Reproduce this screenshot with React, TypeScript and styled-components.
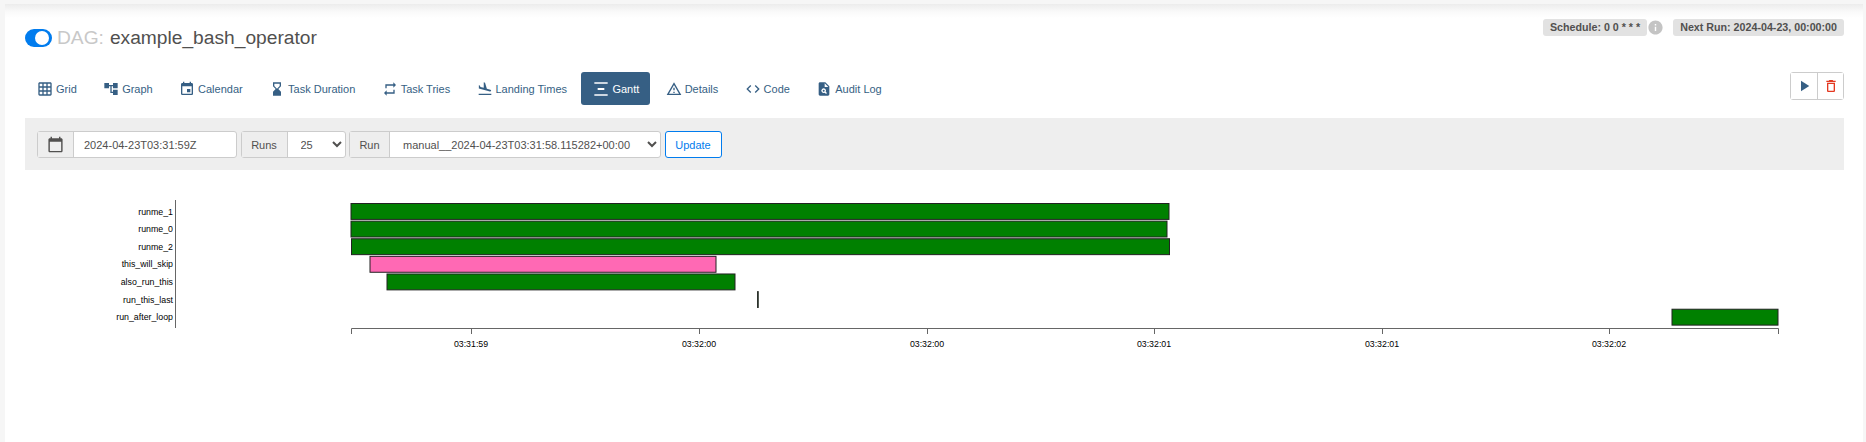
import { FC } from "react"
import styled, { createGlobalStyle } from "styled-components"
import { IconType } from "react-icons"
import {
  MdAccountTree,
  MdCalendarToday,
  MdCode,
  MdDeleteOutline,
  MdEvent,
  MdFlightLand,
  MdGridOn,
  MdHourglassBottom,
  MdInfo,
  MdOutlineWarningAmber,
  MdPlagiarism,
  MdPlayArrow,
  MdRepeat,
  MdVerticalDistribute,
} from "react-icons/md"

type Tab = { label: string; icon: IconType; active?: boolean }

const tabs: Tab[] = [
  { label: "Grid", icon: MdGridOn },
  { label: "Graph", icon: MdAccountTree },
  { label: "Calendar", icon: MdEvent },
  { label: "Task Duration", icon: MdHourglassBottom },
  { label: "Task Tries", icon: MdRepeat },
  { label: "Landing Times", icon: MdFlightLand },
  { label: "Gantt", icon: MdVerticalDistribute, active: true },
  { label: "Details", icon: MdOutlineWarningAmber },
  { label: "Code", icon: MdCode },
  { label: "Audit Log", icon: MdPlagiarism },
]

type Task = { name: string; start: number; end: number; color: string }

const GREEN = "#008000"
const PINK = "#ff69b4"

const tasks: Task[] = [
  { name: "runme_1", start: 351, end: 1169, color: GREEN },
  { name: "runme_0", start: 351, end: 1167, color: GREEN },
  { name: "runme_2", start: 351.5, end: 1169.5, color: GREEN },
  { name: "this_will_skip", start: 370, end: 716, color: PINK },
  { name: "also_run_this", start: 387, end: 735, color: GREEN },
  { name: "run_this_last", start: 757.6, end: 758.2, color: GREEN },
  { name: "run_after_loop", start: 1672, end: 1778, color: GREEN },
]

const ticks = [
  { x: 471, label: "03:31:59" },
  { x: 699, label: "03:32:00" },
  { x: 927, label: "03:32:00" },
  { x: 1154, label: "03:32:01" },
  { x: 1382, label: "03:32:01" },
  { x: 1609, label: "03:32:02" },
]

const ROW_TOP = 203.5
const ROW_STEP = 17.62
const ROW_HEIGHT = 15.9
const AXIS_Y = 328.5

const GanttChart: FC = () => (
  <Chart viewBox="25 170 1819 268" width="1819" height="268">
    <AxisLine d="M175.5 200V328" />
    {tasks.map((task, i) => (
      <g key={task.name}>
        <TaskLabel x={173} y={ROW_TOP + ROW_STEP * i + 11}>
          {task.name}
        </TaskLabel>
        <Bar
          x={task.start}
          y={ROW_TOP + ROW_STEP * i}
          width={task.end - task.start}
          height={ROW_HEIGHT}
          fill={task.color}
        />
      </g>
    ))}
    <AxisLine d={`M351.5 334V${AXIS_Y}H1778.5V334`} />
    {ticks.map((tick, i) => (
      <g key={i}>
        <AxisLine d={`M${tick.x + 0.5} ${AXIS_Y}V334`} />
        <TickLabel x={tick.x} y={347}>
          {tick.label}
        </TickLabel>
      </g>
    ))}
  </Chart>
)

export default function App() {
  return (
    <>
      <GlobalStyle />
      <Page>
        <Header>
          <Title>
            <Toggle />
            <DagWord>DAG:</DagWord>
            <DagName>example_bash_operator</DagName>
          </Title>
          <Badges>
            <Badge>Schedule: 0 0 * * *</Badge>
            <InfoIcon />
            <NextRun>Next Run: 2024-04-23, 00:00:00</NextRun>
          </Badges>
        </Header>
        <TabRow>
          <Tabs>
            {tabs.map(({ label, icon: Icon, active }) => (
              <TabLink key={label} $active={active}>
                <Icon size={16} />
                {label}
              </TabLink>
            ))}
          </Tabs>
          <Actions>
            <ActionButton $color="#365f84">
              <MdPlayArrow size={18} />
            </ActionButton>
            <ActionButton $color="#e43921">
              <MdDeleteOutline size={16} />
            </ActionButton>
          </Actions>
        </TabRow>
        <FilterBar>
          <FieldGroup $width={200}>
            <Addon $width={36}>
              <MdCalendarToday size={17} />
            </Addon>
            <DateInput defaultValue="2024-04-23T03:31:59Z" />
          </FieldGroup>
          <FieldGroup $width={105}>
            <Addon $width={46}>Runs</Addon>
            <Select defaultValue="25">
              <option>25</option>
            </Select>
          </FieldGroup>
          <FieldGroup $width={312}>
            <Addon $width={40}>Run</Addon>
            <Select>
              <option>manual__2024-04-23T03:31:58.115282+00:00</option>
            </Select>
          </FieldGroup>
          <UpdateButton>Update</UpdateButton>
        </FilterBar>
        <GanttChart />
      </Page>
    </>
  )
}

const GlobalStyle = createGlobalStyle`
  html, body {
    margin: 0;
    height: 100%;
    overflow: hidden;
    background: #f6f6f6;
    font-family: "Liberation Sans", Arial, sans-serif;
  }
`

const Page = styled.main`
  box-sizing: border-box;
  height: 438px;
  margin: 4px 3px 0 5px;
  padding: 0 19px 0 20px;
  background: linear-gradient(#ececec, #fafafa 8px, #fff 14px);
  background-repeat: no-repeat;
  overflow: hidden;
`

const Header = styled.header`
  display: flex;
  justify-content: space-between;
  align-items: flex-start;
  height: 68px;
`

const Title = styled.h4`
  display: flex;
  align-items: center;
  height: 28px;
  margin: 20px 0 0;
  font-size: 19.2px;
  font-weight: 400;
`

const Toggle = styled.span`
  position: relative;
  width: 27px;
  height: 18px;
  margin-right: 5px;
  border-radius: 9px;
  background: #017cee;

  &::after {
    content: "";
    position: absolute;
    top: 2px;
    right: 3px;
    width: 14px;
    height: 14px;
    border-radius: 50%;
    background: #fff;
  }
`

const DagWord = styled.span`
  margin-right: 6px;
  color: #c8c8c8;
`

const DagName = styled.span`
  color: #51504f;
`

const Badges = styled.div`
  display: flex;
  align-items: center;
  margin-top: 15px;
`

const Badge = styled.span`
  box-sizing: border-box;
  height: 17px;
  padding: 0 7px;
  border-radius: 3px;
  background: #e2e2e2;
  color: #51504f;
  font-size: 10.7px;
  font-weight: 700;
  line-height: 17px;
  white-space: nowrap;
`

const NextRun = styled(Badge)`
  margin-left: 9px;
`

const InfoIcon = styled(MdInfo)`
  width: 17px;
  height: 17px;
  color: #c4c4c4;
`

const TabRow = styled.div`
  display: flex;
  justify-content: space-between;
  align-items: flex-start;
  height: 33px;
  margin-bottom: 13px;
`

const Tabs = styled.nav`
  display: flex;
  gap: 3.35px;
`

const TabLink = styled.a<{ $active?: boolean }>`
  display: flex;
  align-items: center;
  gap: 3px;
  height: 33px;
  padding: 0 11px 0 12px;
  border-radius: 3px;
  background: ${(p) => (p.$active ? "#365f84" : "transparent")};
  color: ${(p) => (p.$active ? "#fff" : "#365f84")};
  font-size: 11px;
  white-space: nowrap;
`

const Actions = styled.div`
  display: flex;
  box-sizing: border-box;
  height: 28px;
  border: 1px solid #ccc;
  border-radius: 3px;
`

const ActionButton = styled.button<{ $color: string }>`
  display: flex;
  align-items: center;
  justify-content: center;
  width: 26px;
  padding: 0;
  border: 0;
  background: #fff;
  color: ${(p) => p.$color};

  & + & {
    border-left: 1px solid #ccc;
  }
`

const FilterBar = styled.section`
  display: flex;
  gap: 3.5px;
  box-sizing: border-box;
  height: 52px;
  padding: 13px 12px;
  background: #eee;
`

const FieldGroup = styled.div<{ $width: number }>`
  display: flex;
  box-sizing: border-box;
  width: ${(p) => p.$width}px;
  height: 27px;
  border: 1px solid #ccc;
  border-radius: 3px;
  background: #fff;
`

const Addon = styled.span<{ $width: number }>`
  display: flex;
  flex: none;
  align-items: center;
  justify-content: center;
  box-sizing: border-box;
  width: ${(p) => p.$width}px;
  border-right: 1px solid #ccc;
  background: #eee;
  color: #51504f;
  font-size: 11px;
`

const DateInput = styled.input`
  flex: 1;
  min-width: 0;
  padding: 0 10px;
  border: 0;
  background: transparent;
  color: #51504f;
  font-family: inherit;
  font-size: 11px;
`

const Select = styled.select`
  flex: 1;
  min-width: 0;
  padding: 0 2px 0 9px;
  border: 0;
  background: transparent;
  color: #51504f;
  font-family: inherit;
  font-size: 11px;
`

const UpdateButton = styled.button`
  box-sizing: border-box;
  width: 57px;
  height: 27px;
  padding: 0;
  border: 1px solid #017cee;
  border-radius: 3px;
  background: #fff;
  color: #017cee;
  font-family: inherit;
  font-size: 11px;
`

const Chart = styled.svg`
  display: block;
`

const AxisLine = styled.path`
  fill: none;
  stroke: #666;
  stroke-width: 1;
`

const Bar = styled.rect`
  stroke: #222;
  stroke-width: 1;
`

const TaskLabel = styled.text`
  fill: #000;
  font-size: 8.8px;
  text-anchor: end;
`

const TickLabel = styled.text`
  fill: #000;
  font-size: 8.8px;
  text-anchor: middle;
`
